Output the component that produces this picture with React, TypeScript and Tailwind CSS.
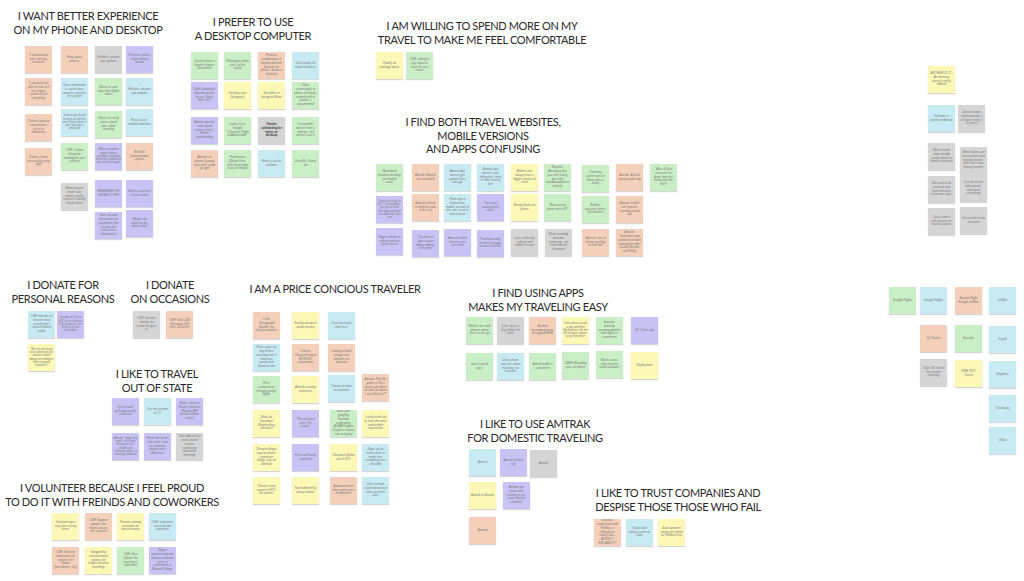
type Tone = "peach" | "purple" | "cyan" | "green" | "yellow" | "gray";

interface Note {
  x: number;
  y: number;
  tone: Tone;
  text: string;
  bold?: boolean;
}

interface Heading {
  cx: number;
  y: number;
  lines: string[];
}

const toneClass: Record<Tone, string> = {
  peach: "bg-[#f4cfb9]",
  purple: "bg-[#c9c2f4]",
  cyan: "bg-[#c8ebf3]",
  green: "bg-[#caeec5]",
  yellow: "bg-[#fdf8b6]",
  gray: "bg-[#d5d5d5]",
};

const headings: Heading[] = [
  { cx: 88, y: 9, lines: ["I WANT BETTER EXPERIENCE", "ON MY PHONE AND DESKTOP"] },
  { cx: 253, y: 15, lines: ["I PREFER TO USE", "A DESKTOP COMPUTER"] },
  { cx: 482, y: 19, lines: ["I AM WILLING TO SPEND MORE ON MY", "TRAVEL TO MAKE ME FEEL COMFORTABLE"] },
  { cx: 483, y: 115, lines: ["I FIND BOTH TRAVEL WEBSITES,", "MOBILE VERSIONS", "AND APPS CONFUSING"] },
  { cx: 63, y: 278, lines: ["I DONATE FOR", "PERSONAL REASONS"] },
  { cx: 170, y: 278, lines: ["I DONATE", "ON OCCASIONS"] },
  { cx: 157, y: 367, lines: ["I LIKE TO TRAVEL", "OUT OF STATE"] },
  { cx: 335, y: 282, lines: ["I AM A PRICE CONCIOUS TRAVELER"] },
  { cx: 538, y: 286, lines: ["I FIND USING APPS", "MAKES MY TRAVELING EASY"] },
  { cx: 535, y: 417, lines: ["I LIKE TO USE AMTRAK", "FOR DOMESTIC TRAVELING"] },
  { cx: 678, y: 486, lines: ["I LIKE TO TRUST COMPANIES AND", "DESPISE THOSE THOSE WHO FAIL"] },
  { cx: 112, y: 481, lines: ["I VOLUNTEER BECAUSE I FEEL PROUD", "TO DO IT WITH FREINDS AND COWORKERS"] },
];

const notes: Note[] = [
  // better experience on phone and desktop
  { x: 25, y: 46, tone: "peach", text: "\u201cI wanted more tabs open for research\u201d" },
  { x: 25, y: 78, tone: "peach", text: "\u201cI wanted to be able to look at it on a larger screen to see everything\u201d" },
  { x: 25, y: 114, tone: "peach", text: "Criteria: location convenience, close to attractions" },
  { x: 25, y: 148, tone: "peach", text: "Criteria: Dates are usually pretty rigid" },
  { x: 61, y: 46, tone: "peach", text: "Easy, quick process" },
  { x: 61, y: 78, tone: "cyan", text: "Once information is saved once, must be saved in the system" },
  { x: 61, y: 109, tone: "cyan", text: "Technology should be kept up with the time (show tickets in app, fantastic a small pdf)" },
  { x: 61, y: 143, tone: "green", text: "CSR: Carbon Footprint tracking for your journey" },
  { x: 61, y: 183, tone: "gray", text: "Better way to make sure tickets can be reused if nobody checks them" },
  { x: 95, y: 46, tone: "gray", text: "Reliable, on-time app updates" },
  { x: 95, y: 78, tone: "green", text: "Wants to save data from flights taken" },
  { x: 95, y: 111, tone: "green", text: "Wants to easily access travel docs while traveling" },
  { x: 95, y: 143, tone: "purple", text: "Make a purchase online without needing to populate fields he's completed time and time again" },
  { x: 95, y: 180, tone: "purple", text: "REMEMBER MY DETAILS!! FFS" },
  { x: 95, y: 212, tone: "purple", text: "Save account information for purchases (site records and stores basic information)" },
  { x: 126, y: 46, tone: "purple", text: "Purchase tickets online without hassle" },
  { x: 126, y: 78, tone: "cyan", text: "Reliable, on-time app updates" },
  { x: 126, y: 109, tone: "cyan", text: "Easy to use, modern interface" },
  { x: 126, y: 143, tone: "peach", text: "Reliable transportation options" },
  { x: 126, y: 180, tone: "purple", text: "Make a purchase in fewer clicks" },
  { x: 126, y: 210, tone: "purple", text: "\u201cMaybe two clicks for the whole thing\u201d" },

  // desktop computer
  { x: 191, y: 52, tone: "green", text: "Used to have a binder of paper documents" },
  { x: 224, y: 52, tone: "green", text: "Webpages when she's at her laptop" },
  { x: 258, y: 52, tone: "peach", text: "Process combination of mobile and web (browse on phone - book on desktop)" },
  { x: 292, y: 52, tone: "cyan", text: "Uses laptop for travel searches" },
  { x: 191, y: 82, tone: "purple", text: "Didn't download Amtrak app bc he just \u201cdidn't think of it\u201d" },
  { x: 224, y: 82, tone: "yellow", text: "Desktop user (Incognito)" },
  { x: 258, y: 82, tone: "yellow", text: "Searches in Incognito Mode" },
  { x: 292, y: 82, tone: "green", text: "Takes screenshots or photos of tickets, printed stuff in pocket -> documented" },
  { x: 191, y: 117, tone: "purple", text: "Amtrak app has some good ratings \u201clavier\u201d before downloading" },
  { x: 224, y: 117, tone: "green", text: "Laptop User. Google \u201cCheapest Flight to Amsterdam\u201d" },
  { x: 258, y: 117, tone: "gray", text: "Checks scheduling for trains on desktop", bold: true },
  { x: 292, y: 117, tone: "green", text: "If a provider doesn't have a website, she doesn't trust it" },
  { x: 191, y: 150, tone: "peach", text: "Amtrak: on phone if young sees don't come up right" },
  { x: 224, y: 150, tone: "green", text: "Preferences (Gluten Free, Kids Seat) hard to do on mobile" },
  { x: 258, y: 150, tone: "cyan", text: "Rents a car for activities" },
  { x: 292, y: 150, tone: "green", text: "Used Be Transit site" },

  // spend more
  { x: 376, y: 52, tone: "yellow", text: "Family do package deals" },
  { x: 406, y: 52, tone: "green", text: "CSR: willing to pay equal or more for eco travel" },

  // confusing
  { x: 376, y: 164, tone: "green", text: "Movement between desktop and mobile sucks" },
  { x: 412, y: 164, tone: "peach", text: "Amtrak: Hard to use on mobile" },
  { x: 444, y: 164, tone: "cyan", text: "Amtrak App doesn't get updated fast enough" },
  { x: 477, y: 164, tone: "cyan", text: "Amtrak app doesn't save billing info, need to redo it every time" },
  { x: 511, y: 164, tone: "yellow", text: "Mobile sites always have a bigger chance of error" },
  { x: 544, y: 164, tone: "green", text: "Expedia: Annoying that you can't easily go to the accommodation's website" },
  { x: 582, y: 165, tone: "green", text: "Currency conversion on these sites is tricky" },
  { x: 616, y: 164, tone: "peach", text: "Amtrak: A lot of pricing confusing" },
  { x: 650, y: 164, tone: "green", text: "\u201cAfter all that research I've done, how do I hang onto the info?\u201d" },
  { x: 376, y: 196, tone: "purple", text: "If you try to click on the ## of travellers, you get an error message and have to completely start over" },
  { x: 412, y: 194, tone: "peach", text: "Amtrak website is kind of a pain in the ass" },
  { x: 444, y: 194, tone: "cyan", text: "Finds app is better than mobile version of the site, so uses that instead" },
  { x: 477, y: 194, tone: "purple", text: "\u201cSo many unnecessary clicks\u201d" },
  { x: 511, y: 194, tone: "yellow", text: "Rarely books on phone" },
  { x: 544, y: 194, tone: "green", text: "\u201cHow can my phone do it all?\u201d" },
  { x: 582, y: 196, tone: "green", text: "Endless accounts drives her bonkers" },
  { x: 616, y: 196, tone: "peach", text: "Amtrak: mobile site requires zooming in and out" },
  { x: 376, y: 228, tone: "purple", text: "Pages refresh or redirect without good reason" },
  { x: 412, y: 230, tone: "purple", text: "\u201cYou have to type in your billing address every time\u201d" },
  { x: 444, y: 229, tone: "purple", text: "Amtrak mobile doesn't save user data" },
  { x: 477, y: 230, tone: "purple", text: "\u201cFundamentally, on the first page, it starts out bad\u201d" },
  { x: 511, y: 229, tone: "gray", text: "Less confusing website and mobile version" },
  { x: 545, y: 229, tone: "gray", text: "Finds traveling websites confusing - not experienced commuter" },
  { x: 582, y: 229, tone: "peach", text: "Amtrak: Lots of phone scrolling to find stuff" },
  { x: 616, y: 229, tone: "peach", text: "Amtrak: Sometimes get confused around picking the right station (Boston and Philly)" },

  // right upper column
  { x: 928, y: 66, tone: "yellow", text: "ANTHEM JCTC: Air memory doesn't overly difficult" },
  { x: 928, y: 105, tone: "cyan", text: "2-4 times a month on Amtrak" },
  { x: 958, y: 105, tone: "gray", text: "Doesn't travel internationally a lot (once every 2 -3 years)" },
  { x: 928, y: 143, tone: "gray", text: "When travels domestically usually drives to familiar locations" },
  { x: 960, y: 147, tone: "gray", text: "When tickets are not activated and nobody checks, feels that it was money wasted" },
  { x: 928, y: 176, tone: "gray", text: "Not used to do research and finds it hard to learn new ways" },
  { x: 960, y: 175, tone: "gray", text: "Usually travels with parents, who book everything" },
  { x: 928, y: 208, tone: "gray", text: "Trusts others with choices for travel locations" },
  { x: 960, y: 207, tone: "gray", text: "Doesn't like to do research" },

  // donate
  { x: 28, y: 311, tone: "cyan", text: "CSR: donates to charities that usually don't receive federal public" },
  { x: 57, y: 311, tone: "purple", text: "Donates to Out up NYC bc he believes in the purpose + his friend is on the board there" },
  { x: 28, y: 344, tone: "yellow", text: "\u201cWe are very lucky to be where we are and we should always be looking to help everyone around us\u201d" },
  { x: 133, y: 311, tone: "gray", text: "CSR: donates money via events he goes to" },
  { x: 166, y: 311, tone: "peach", text: "CSR: Gets LDS Donations (20 here, 20 there)" },

  // out of state
  { x: 112, y: 398, tone: "purple", text: "Visit friends/ girlfriend weekly in Boston" },
  { x: 144, y: 398, tone: "cyan", text: "Visit her parents in CT" },
  { x: 176, y: 398, tone: "purple", text: "Make it back to Rhode Island on Monday AM (before school starts)" },
  { x: 112, y: 433, tone: "purple", text: "Amtrak: \u201cfor the tiny trains\u201d to RI from Boston bc fast, reliable and \u201crelatively cheap\u201d on morning commute" },
  { x: 144, y: 433, tone: "purple", text: "Prefer the faster side of the Cost vs commute, despite price difference" },
  { x: 176, y: 433, tone: "gray", text: "Takes Amtrak for work related events: continuing education, meetings" },

  // price conscious
  { x: 253, y: 312, tone: "peach", text: "Is the \u201cDesignated Booker\u201d for family vacations" },
  { x: 292, y: 312, tone: "yellow", text: "Sort by cheapest and/or fastest" },
  { x: 328, y: 312, tone: "cyan", text: "Uses her lunch time for it" },
  { x: 253, y: 344, tone: "cyan", text: "Prices goes up day before traveling date if ticket not purchased ahead of time" },
  { x: 292, y: 344, tone: "peach", text: "Criteria: Cheapest option WITHOUT connections" },
  { x: 328, y: 344, tone: "peach", text: "Looking at both trivago and websites for decision" },
  { x: 253, y: 376, tone: "green", text: "Price comparison through google flights" },
  { x: 292, y: 376, tone: "yellow", text: "Amtrak is pretty expensive" },
  { x: 328, y: 375, tone: "cyan", text: "Checks reviews for activities" },
  { x: 362, y: 374, tone: "peach", text: "Amtrak: Play the game of \u201cDo I want to get there on time, or when I can afford to?\u201d" },
  { x: 253, y: 410, tone: "yellow", text: "Book on Tuesdays/ Wednesdays cheapest" },
  { x: 292, y: 410, tone: "purple", text: "\u201cThe cheapest seat: The couch.\u201d" },
  { x: 330, y: 410, tone: "green", text: "Even after googling Expedia comparing, ALWAYS goes Kayak to source site on laptop" },
  { x: 362, y: 410, tone: "yellow", text: "I rarely seek out to have the most comfortable experience" },
  { x: 253, y: 444, tone: "yellow", text: "Cheaper things: pay on phone; expensive things: pay on desktop" },
  { x: 292, y: 444, tone: "purple", text: "Price and timing = umbrella" },
  { x: 330, y: 444, tone: "yellow", text: "Cheapest Option out of NYC" },
  { x: 362, y: 444, tone: "cyan", text: "Signs up for travel alerts to make sure everything runs smoothly" },
  { x: 253, y: 477, tone: "yellow", text: "Checks every airport in NYC for options" },
  { x: 292, y: 477, tone: "yellow", text: "Not bothered by cheap airlines" },
  { x: 330, y: 477, tone: "peach", text: "Awkward travel times were not a dealbreaker" },
  { x: 362, y: 477, tone: "cyan", text: "Likes to book travel ahead and book activities later" },

  // apps easy
  { x: 466, y: 317, tone: "green", text: "Mobile sites and phones when she's on the go" },
  { x: 497, y: 317, tone: "gray", text: "Uses apps to buy tickets for trains" },
  { x: 529, y: 317, tone: "peach", text: "Booked accommodations through AirBNB" },
  { x: 562, y: 317, tone: "yellow", text: "Likes option to pick a day and then SkyScanner tells her the cheapest places to go from there" },
  { x: 596, y: 317, tone: "green", text: "Expedia: booking accommodations with flights is convenient" },
  { x: 631, y: 317, tone: "purple", text: "SF Ticket app" },
  { x: 466, y: 353, tone: "green", text: "Uses Lots of apps" },
  { x: 497, y: 353, tone: "cyan", text: "Uses phone apps for actual traveling, not searches" },
  { x: 529, y: 353, tone: "green", text: "Airbnb wallet is convenient" },
  { x: 562, y: 352, tone: "green", text: "LNER: Boarding pass on phone" },
  { x: 596, y: 351, tone: "green", text: "Wants a one-stop shop for travel accounts" },
  { x: 631, y: 352, tone: "yellow", text: "SkyScanner" },

  // amtrak
  { x: 469, y: 449, tone: "cyan", text: "Amtrak" },
  { x: 500, y: 449, tone: "purple", text: "Amtrak (mobile site)" },
  { x: 530, y: 450, tone: "gray", text: "Amtrak" },
  { x: 469, y: 482, tone: "yellow", text: "Amtrak to Boston" },
  { x: 503, y: 482, tone: "purple", text: "Amtrak app (even after realizing it pre-saves favorite station?)" },
  { x: 469, y: 517, tone: "peach", text: "Amtrak" },

  // trust companies
  { x: 594, y: 519, tone: "peach", text: "Bad bus experience with FlixBus -> (Strictly no name) but... ANXIETY RELIABILITY" },
  { x: 626, y: 519, tone: "cyan", text: "Trains don't always come on time" },
  { x: 658, y: 519, tone: "yellow", text: "Bad customer service for friend w/ FlixBus/Chat" },

  // volunteer
  { x: 52, y: 513, tone: "yellow", text: "Volunteering is very close to my heart" },
  { x: 85, y: 513, tone: "peach", text: "CSR: Support people she knows causes she supports" },
  { x: 117, y: 513, tone: "yellow", text: "Friends running marathon for breast cancer" },
  { x: 149, y: 513, tone: "cyan", text: "CSR: volunteers via work with coworkers" },
  { x: 52, y: 547, tone: "peach", text: "CSR: Gives to fundraisers for people she knows (marathons, etc)" },
  { x: 85, y: 547, tone: "yellow", text: "Intrigued by environmental options for longer distance travelling" },
  { x: 117, y: 547, tone: "green", text: "CSR: Eco Options for traveling is important" },
  { x: 149, y: 547, tone: "purple", text: "Began volunteering with Jamaica stuntent and is it connection at Boston College" },

  // right lower services
  { x: 889, y: 287, tone: "green", text: "Google Flights" },
  { x: 920, y: 287, tone: "cyan", text: "Google Flights" },
  { x: 955, y: 287, tone: "peach", text: "Booked flight through JetBlue" },
  { x: 989, y: 287, tone: "cyan", text: "JetBlue" },
  { x: 920, y: 325, tone: "peach", text: "NJ Transit" },
  { x: 955, y: 325, tone: "green", text: "Expedia" },
  { x: 989, y: 326, tone: "cyan", text: "Kayak" },
  { x: 920, y: 359, tone: "gray", text: "Takes NJ Transit for in-state traveling" },
  { x: 955, y: 360, tone: "yellow", text: "MTA/ NYC Transit" },
  { x: 989, y: 361, tone: "cyan", text: "Megabus" },
  { x: 989, y: 395, tone: "cyan", text: "Travelocity" },
  { x: 989, y: 427, tone: "cyan", text: "Orbitz" },
];

function Sticky({ note }: { note: Note }) {
  // the wordiest notes get a tighter line so they still fit the square
  const dense = note.text.length > 84;
  return (
    <div
      className={`absolute flex h-[27px] w-[27px] items-center justify-center overflow-hidden text-center shadow-[0_1px_1px_rgba(0,0,0,0.16)] ${
        dense ? "p-[1px]" : "p-[2px]"
      } ${toneClass[note.tone]}`}
      style={{ left: note.x, top: note.y }}
    >
      <span
        className={`${dense ? "text-[2.7px] leading-[3.2px]" : "text-[3px] leading-[3.8px]"} ${
          note.bold ? "font-bold text-[#333]" : "italic text-[#777]"
        }`}
      >
        {note.text}
      </span>
    </div>
  );
}

function ClusterTitle({ heading }: { heading: Heading }) {
  return (
    <div
      className="absolute -translate-x-1/2 whitespace-nowrap text-center text-[11px] leading-[13.5px] tracking-[-0.35px] text-[#2a2a2a] [font-family:Lato,'Liberation_Sans',sans-serif]"
      style={{ left: heading.cx, top: heading.y }}
    >
      {heading.lines.map((line) => (
        <div key={line}>{line}</div>
      ))}
    </div>
  );
}

export default function App() {
  return (
    <div className="relative h-[581px] w-[1024px] overflow-hidden bg-white [font-family:'Liberation_Sans',sans-serif]">
      {headings.map((h) => (
        <ClusterTitle key={h.lines[0] + h.cx} heading={h} />
      ))}
      {notes.map((n, i) => (
        <Sticky key={i} note={n} />
      ))}
    </div>
  );
}
